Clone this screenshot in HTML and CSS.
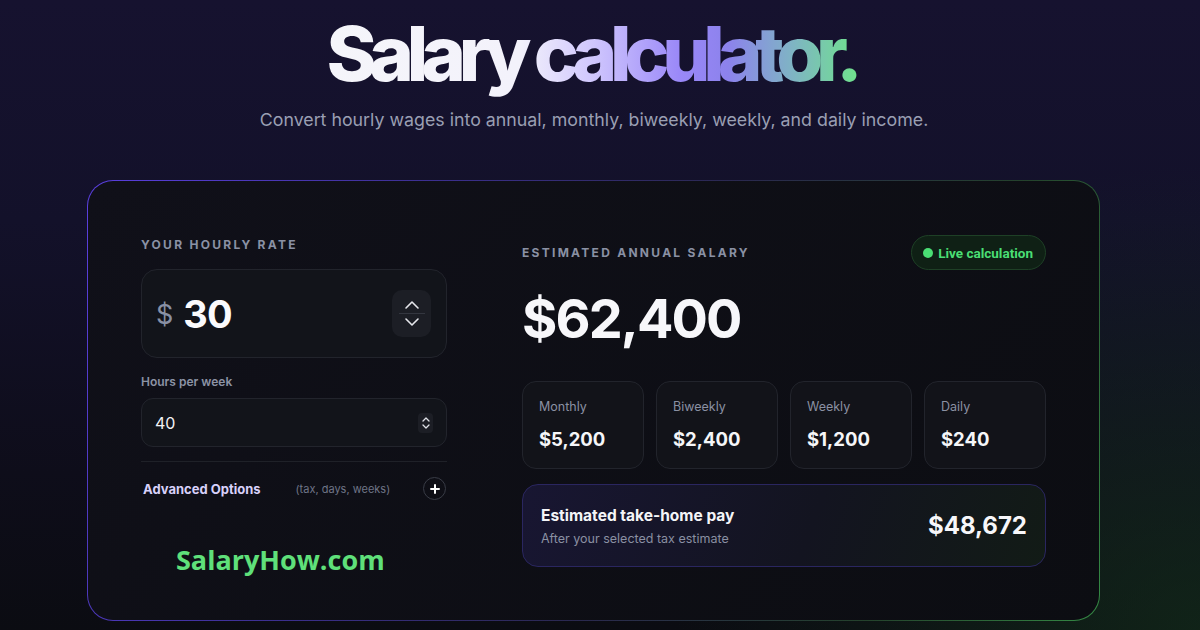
FILE: index.html
```html
<!DOCTYPE html>
<html lang="en">
<head>
    <meta charset="UTF-8">
    <meta name="viewport" content="width=device-width, initial-scale=1.0">
    <title>Salary calculator</title>
    <link rel="stylesheet" href="styles.css">
</head>
<body>

<div class="page">

    <header class="hero">
        <h1 class="hero-title">Salary calculator.</h1>
        <p class="hero-sub">Convert hourly wages into annual, monthly, biweekly, weekly, and daily income.</p>
    </header>

    <main class="card">

        <!-- Inputs -->
        <section class="inputs">
            <div class="eyebrow">Your hourly rate</div>

            <div class="rate-field">
                <span class="rate-currency">$</span>
                <span class="rate-value">30</span>
                <div class="stepper">
                    <svg width="16" height="10" viewBox="0 0 16 10"><path d="M2 8 L8 2 L14 8" fill="none" stroke="#e6e7ec" stroke-width="1.6" stroke-linecap="round" stroke-linejoin="round"/></svg>
                    <span class="stepper-line"></span>
                    <svg width="16" height="10" viewBox="0 0 16 10"><path d="M2 2 L8 8 L14 2" fill="none" stroke="#e6e7ec" stroke-width="1.6" stroke-linecap="round" stroke-linejoin="round"/></svg>
                </div>
            </div>

            <label class="field-label" for="hours">Hours per week</label>
            <div class="hours-field">
                <span id="hours" class="hours-value">40</span>
                <div class="mini-stepper">
                    <svg width="10" height="6" viewBox="0 0 10 6"><path d="M2 5 L5 2 L8 5" fill="none" stroke="#dfe1e7" stroke-width="1.3" stroke-linecap="round" stroke-linejoin="round"/></svg>
                    <svg width="10" height="6" viewBox="0 0 10 6"><path d="M2 1 L5 4 L8 1" fill="none" stroke="#dfe1e7" stroke-width="1.3" stroke-linecap="round" stroke-linejoin="round"/></svg>
                </div>
            </div>

            <div class="advanced">
                <span class="advanced-title">Advanced Options</span>
                <span class="advanced-hint">(tax, days, weeks)</span>
                <span class="plus-btn">
                    <svg width="10" height="10" viewBox="0 0 10 10"><path d="M5 1 V9 M1 5 H9" stroke="#fff" stroke-width="2" stroke-linecap="round"/></svg>
                </span>
            </div>

            <div class="brand">SalaryHow.com</div>
        </section>

        <!-- Results -->
        <section class="results">
            <div class="results-head">
                <div class="eyebrow">Estimated annual salary</div>
                <span class="live-pill"><span class="live-dot"></span>Live calculation</span>
            </div>

            <div class="annual">$62,400</div>

            <div class="breakdown">
                <div class="stat">
                    <div class="stat-label">Monthly</div>
                    <div class="stat-value">$5,200</div>
                </div>
                <div class="stat">
                    <div class="stat-label">Biweekly</div>
                    <div class="stat-value">$2,400</div>
                </div>
                <div class="stat">
                    <div class="stat-label">Weekly</div>
                    <div class="stat-value">$1,200</div>
                </div>
                <div class="stat">
                    <div class="stat-label">Daily</div>
                    <div class="stat-value">$240</div>
                </div>
            </div>

            <div class="takehome">
                <div>
                    <div class="takehome-title">Estimated take-home pay</div>
                    <div class="takehome-sub">After your selected tax estimate</div>
                </div>
                <div class="takehome-value">$48,672</div>
            </div>
        </section>

    </main>

</div>

</body>
</html>
```

FILE: styles.css
```css
* {
    box-sizing: border-box;
}

body {
    margin: 0;
    min-height: 630px;
    font-family: 'Inter', 'Liberation Sans', sans-serif;
    color: #f4f5f8;
    background:
        radial-gradient(ellipse 700px 620px at 100% 100%, rgba(22, 58, 30, 0.5), transparent 75%),
        linear-gradient(180deg, #16122f 0%, #13112a 35%, #0e0d1a 75%, #0b0c12 100%);
    overflow: hidden;
}

.page {
    width: 1188px;
    padding-top: 8px;
}

/* Header */
.hero {
    text-align: center;
}

.hero-title {
    display: inline-block;
    margin: 0;
    font-size: 76px;
    font-weight: 800;
    letter-spacing: -0.095em;
    line-height: 90px;
    padding-right: 6px;
    background: linear-gradient(90deg, #f5f5fa 0%, #f3f2fb 36%, #cfc6fd 50%, #9a88f8 66%, #8c82ec 75%, #7fb4c4 87%, #6ee589 100%);
    -webkit-background-clip: text;
    background-clip: text;
    color: transparent;
}

.hero-sub {
    margin: 10px 0 0;
    font-size: 17.8px;
    line-height: 24px;
    color: #9a9fb3;
}

/* Card */
.card {
    width: 1013px;
    margin: 48px 0 0 87px;
    padding: 54px 53px 40px;
    display: grid;
    grid-template-columns: 306px 1fr;
    column-gap: 75px;
    border: 1.5px solid transparent;
    border-radius: 26px;
    background:
        linear-gradient(135deg, #101019, #0c0d12) padding-box,
        linear-gradient(110deg, #5a3fe0 0%, #3b2f8e 30%, #2a2850 55%, #24422c 80%, #358a45 100%) border-box;
    height: 441px;
}

.eyebrow {
    font-size: 12px;
    font-weight: 700;
    letter-spacing: 0.19em;
    text-transform: uppercase;
    color: #8a91a4;
    line-height: 15px;
}

/* Left column */
.inputs .eyebrow {
    margin-top: 2px;
}

.rate-field {
    margin-top: 17px;
    height: 89px;
    display: flex;
    align-items: center;
    padding: 0 15px 0 14px;
    border: 1px solid #22242c;
    border-radius: 16px;
    background: #12141a;
}

.rate-currency {
    font-size: 27px;
    color: #8890a4;
    margin-right: 10px;
    margin-top: 2px;
}

.rate-value {
    font-size: 38px;
    font-weight: 700;
    letter-spacing: -0.02em;
    color: #fafafc;
}

.stepper {
    margin-left: auto;
    width: 39px;
    height: 47px;
    border-radius: 10px;
    background: #1c1e25;
    display: flex;
    flex-direction: column;
    align-items: center;
    justify-content: center;
    gap: 3px;
}

.stepper-line {
    width: 26px;
    height: 1px;
    background: #33363f;
}

.field-label {
    display: block;
    margin-top: 16px;
    font-size: 12px;
    font-weight: 600;
    color: #8c93a5;
    line-height: 15px;
}

.hours-field {
    margin-top: 9px;
    height: 49px;
    display: flex;
    align-items: center;
    padding: 0 13px;
    border: 1px solid #22242c;
    border-radius: 12px;
    background: #12141a;
}

.hours-value {
    font-size: 16px;
    color: #f1f2f5;
}

.mini-stepper {
    margin-left: auto;
    width: 15px;
    height: 20px;
    border-radius: 4px;
    background: #1c1e25;
    display: flex;
    flex-direction: column;
    align-items: center;
    justify-content: center;
    gap: 2px;
}

.advanced {
    margin-top: 14px;
    padding-top: 15px;
    border-top: 1px solid #1f2128;
    display: flex;
    align-items: center;
}

.advanced-title {
    margin-left: 2px;
    font-size: 13px;
    font-weight: 700;
    color: #d8d1fa;
}

.advanced-hint {
    margin-left: 35px;
    font-size: 11px;
    color: #6f7587;
}

.plus-btn {
    margin-left: auto;
    margin-right: 1px;
    width: 23px;
    height: 23px;
    border-radius: 50%;
    border: 1px solid #393c46;
    display: flex;
    align-items: center;
    justify-content: center;
}

.brand {
    margin: 41px 0 0 35px;
    font-family: 'Open Sans', 'Noto Sans', sans-serif;
    font-size: 27px;
    font-weight: 700;
    color: #5fe07a;
}

/* Right column */
.results-head {
    display: flex;
    align-items: center;
    justify-content: space-between;
}

.live-pill {
    height: 35px;
    display: flex;
    align-items: center;
    gap: 5px;
    padding: 0 12px 0 11px;
    border-radius: 18px;
    border: 1px solid #1e4026;
    background: #0f2015;
    font-family: 'Roboto', 'Inter', sans-serif;
    font-size: 13.5px;
    font-weight: 700;
    color: #4ade74;
}

.live-dot {
    width: 10px;
    height: 10px;
    border-radius: 50%;
    background: #4ade74;
}

.annual {
    margin-top: 14px;
    font-size: 54px;
    font-weight: 700;
    letter-spacing: -0.035em;
    line-height: 70px;
    color: #f7f7fa;
}

.breakdown {
    margin-top: 27px;
    display: grid;
    grid-template-columns: repeat(4, 1fr);
    gap: 12px;
}

.stat {
    height: 88px;
    padding: 17px 16px 0;
    border: 1px solid #22242c;
    border-radius: 14px;
    background: #121319;
}

.stat-label {
    font-size: 12.5px;
    color: #8a90a2;
}

.stat-value {
    margin-top: 14px;
    font-size: 18.5px;
    font-weight: 700;
    color: #f5f6f8;
}

.takehome {
    margin-top: 15px;
    height: 83px;
    display: flex;
    align-items: center;
    justify-content: space-between;
    padding: 0 18px 0 18px;
    border: 1px solid #2a2660;
    border-radius: 16px;
    background: linear-gradient(110deg, #181632 0%, #131420 55%, #121b16 100%);
}

.takehome-title {
    font-size: 15.5px;
    font-weight: 700;
    color: #f4f5f8;
}

.takehome-sub {
    margin-top: 6px;
    font-size: 12.5px;
    color: #8a90a2;
}

.takehome-value {
    font-size: 24px;
    font-weight: 700;
    color: #f7f7fa;
}
```
